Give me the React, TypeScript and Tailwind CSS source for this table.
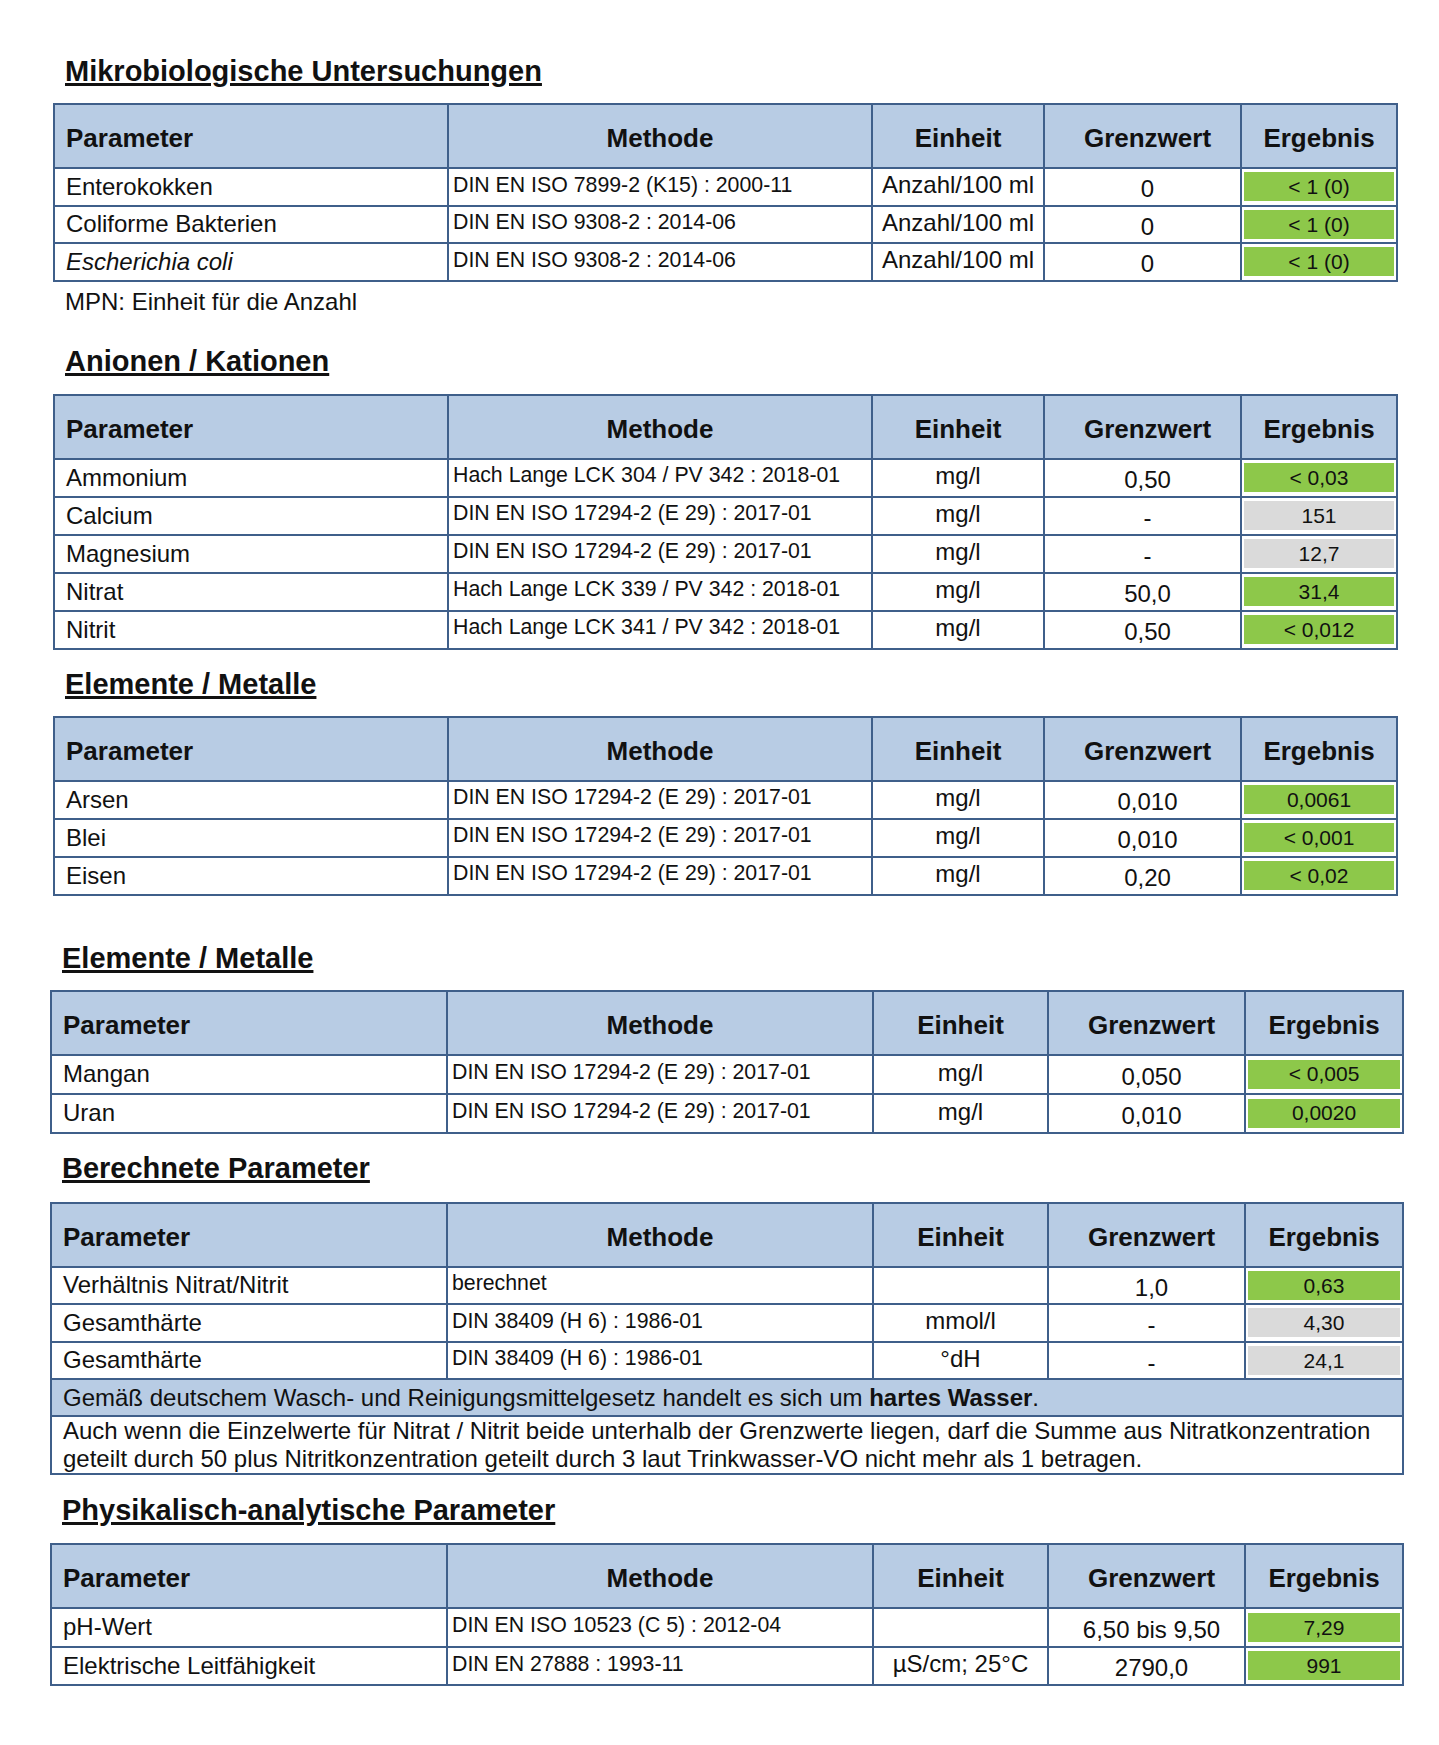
import React from 'react';

type Row = {
  p: React.ReactNode;
  m: string;
  e: string;
  g: string;
  r: string;
  ok: boolean;
};

const MIKRO: Row[] = [
  { p: 'Enterokokken', m: 'DIN EN ISO 7899-2 (K15) : 2000-11', e: 'Anzahl/100 ml', g: '0', r: '< 1 (0)', ok: true },
  { p: 'Coliforme Bakterien', m: 'DIN EN ISO 9308-2 : 2014-06', e: 'Anzahl/100 ml', g: '0', r: '< 1 (0)', ok: true },
  { p: <i>Escherichia coli</i>, m: 'DIN EN ISO 9308-2 : 2014-06', e: 'Anzahl/100 ml', g: '0', r: '< 1 (0)', ok: true },
];

const IONEN: Row[] = [
  { p: 'Ammonium', m: 'Hach Lange LCK 304 / PV 342 : 2018-01', e: 'mg/l', g: '0,50', r: '< 0,03', ok: true },
  { p: 'Calcium', m: 'DIN EN ISO 17294-2 (E 29) : 2017-01', e: 'mg/l', g: '-', r: '151', ok: false },
  { p: 'Magnesium', m: 'DIN EN ISO 17294-2 (E 29) : 2017-01', e: 'mg/l', g: '-', r: '12,7', ok: false },
  { p: 'Nitrat', m: 'Hach Lange LCK 339 / PV 342 : 2018-01', e: 'mg/l', g: '50,0', r: '31,4', ok: true },
  { p: 'Nitrit', m: 'Hach Lange LCK 341 / PV 342 : 2018-01', e: 'mg/l', g: '0,50', r: '< 0,012', ok: true },
];

const METALLE_1: Row[] = [
  { p: 'Arsen', m: 'DIN EN ISO 17294-2 (E 29) : 2017-01', e: 'mg/l', g: '0,010', r: '0,0061', ok: true },
  { p: 'Blei', m: 'DIN EN ISO 17294-2 (E 29) : 2017-01', e: 'mg/l', g: '0,010', r: '< 0,001', ok: true },
  { p: 'Eisen', m: 'DIN EN ISO 17294-2 (E 29) : 2017-01', e: 'mg/l', g: '0,20', r: '< 0,02', ok: true },
];

const METALLE_2: Row[] = [
  { p: 'Mangan', m: 'DIN EN ISO 17294-2 (E 29) : 2017-01', e: 'mg/l', g: '0,050', r: '< 0,005', ok: true },
  { p: 'Uran', m: 'DIN EN ISO 17294-2 (E 29) : 2017-01', e: 'mg/l', g: '0,010', r: '0,0020', ok: true },
];

const BERECHNET: Row[] = [
  { p: 'Verhältnis Nitrat/Nitrit', m: 'berechnet', e: '', g: '1,0', r: '0,63', ok: true },
  { p: 'Gesamthärte', m: 'DIN 38409 (H 6) : 1986-01', e: 'mmol/l', g: '-', r: '4,30', ok: false },
  { p: 'Gesamthärte', m: 'DIN 38409 (H 6) : 1986-01', e: '°dH', g: '-', r: '24,1', ok: false },
];

const PHYSIK: Row[] = [
  { p: 'pH-Wert', m: 'DIN EN ISO 10523 (C 5) : 2012-04', e: '', g: '6,50 bis 9,50', r: '7,29', ok: true },
  { p: 'Elektrische Leitfähigkeit', m: 'DIN EN 27888 : 1993-11', e: 'µS/cm; 25°C', g: '2790,0', r: '991', ok: true },
];

// two slightly different table geometries, as in the scanned report
const COLS = {
  a: ['w-[394px]', 'w-[424px]', 'w-[172px]', 'w-[197px]', 'w-[156px]'],
  b: ['w-[396px]', 'w-[426px]', 'w-[175px]', 'w-[197px]', 'w-[158px]'],
};

const cell = 'border-2 border-[#3f5f8a] p-0 align-middle';

function Title({ children, className }: { children: React.ReactNode; className: string }) {
  return (
    <h2 className={`h-[30px] leading-[30px] text-[29px] font-bold text-[#111] underline decoration-[3px] underline-offset-[2px] ${className}`}>
      {children}
    </h2>
  );
}

function Table({ rows, v, rowH, className, children }: {
  rows: Row[];
  v: 'a' | 'b';
  rowH: string;
  className: string;
  children?: React.ReactNode;
}) {
  const c = COLS[v];
  return (
    <table className={`border-collapse table-fixed text-[#111] ${v === 'a' ? 'w-[1343px]' : 'w-[1352px]'} ${className}`}>
      <colgroup>
        {c.map((w, i) => <col key={i} className={w} />)}
      </colgroup>
      <thead>
        <tr className="h-[64px] bg-[#b8cce4] text-[26px] font-bold">
          <th className={`${cell} text-left pl-[11px] pt-[5px]`}>Parameter</th>
          <th className={`${cell} text-center pt-[5px]`}>Methode</th>
          <th className={`${cell} text-center pt-[5px]`}>Einheit</th>
          <th className={`${cell} text-center pt-[5px] pl-[10px]`}>Grenzwert</th>
          <th className={`${cell} text-center pt-[5px]`}>Ergebnis</th>
        </tr>
      </thead>
      <tbody>
        {rows.map((r, i) => (
          <tr key={i} className={rowH}>
            <td className={`${cell} pl-[11px] text-[24px] leading-none`}>{r.p}</td>
            <td className={`${cell} pl-[4px] pb-[3px] text-[21.3px] leading-none`}>{r.m}</td>
            <td className={`${cell} text-center text-[24px] leading-none pb-[3px]`}>{r.e}</td>
            <td className={`${cell} text-center text-[24px] leading-none pt-[5px] pl-[10px]`}>{r.g}</td>
            <td className={`${cell} px-[2px] py-[3px]`}>
              <div className={`h-[29px] flex items-center justify-center text-[21px] ${r.ok ? 'bg-[#8dc84a]' : 'bg-[#dadada]'}`}>
                {r.r}
              </div>
            </td>
          </tr>
        ))}
        {children}
      </tbody>
    </table>
  );
}

export default function App() {
  return (
    <div className="bg-white w-[1439px] min-h-[1745px] pt-[56px] font-['Liberation_Sans',Arial,sans-serif]">
      <div className="ml-[53px]">
        <Title className="pl-[12px]">Mikrobiologische Untersuchungen</Title>
        <Table rows={MIKRO} v="a" rowH="h-[37.5px]" className="mt-[17px]" />
        <p className="mt-[6px] pl-[12px] h-[28px] leading-[28px] text-[24px] text-[#111]">MPN: Einheit für die Anzahl</p>

        <Title className="pl-[12px] mt-[30px]">Anionen / Kationen</Title>
        <Table rows={IONEN} v="a" rowH="h-[38px]" className="mt-[18px]" />

        <Title className="pl-[12px] mt-[19px]">Elemente / Metalle</Title>
        <Table rows={METALLE_1} v="a" rowH="h-[38px]" className="mt-[17px]" />
      </div>

      <div className="ml-[50px]">
        <Title className="pl-[12px] mt-[47px]">Elemente / Metalle</Title>
        <Table rows={METALLE_2} v="b" rowH="h-[39px]" className="mt-[17px]" />

        <Title className="pl-[12px] mt-[19px]">Berechnete Parameter</Title>
        <Table rows={BERECHNET} v="b" rowH="h-[37.5px]" className="mt-[19px]">
          <tr className="h-[37px] bg-[#b8cce4]">
            <td colSpan={5} className={`${cell} pl-[11px] text-[24px] leading-none`}>
              Gemäß deutschem Wasch- und Reinigungsmittelgesetz handelt es sich um <b>hartes Wasser</b>.
            </td>
          </tr>
          <tr className="h-[56px]">
            <td colSpan={5} className={`${cell} pl-[11px] text-[24px] leading-[28px]`}>
              Auch wenn die Einzelwerte für Nitrat / Nitrit beide unterhalb der Grenzwerte liegen, darf die Summe aus Nitratkonzentration
              <br />
              geteilt durch 50 plus Nitritkonzentration geteilt durch 3 laut Trinkwasser-VO nicht mehr als 1 betragen.
            </td>
          </tr>
        </Table>

        <Title className="pl-[12px] mt-[20px]">Physikalisch-analytische Parameter</Title>
        <Table rows={PHYSIK} v="b" rowH="h-[38.5px]" className="mt-[18px]" />
      </div>
    </div>
  );
}
